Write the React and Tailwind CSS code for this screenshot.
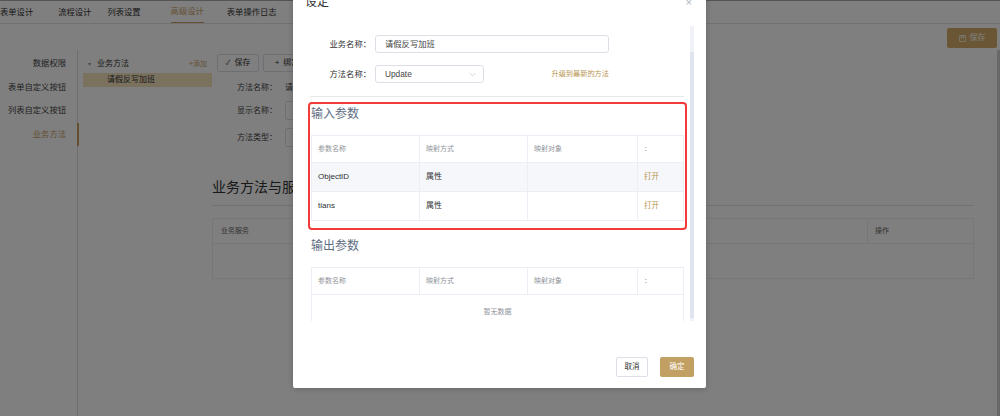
import React from "react";

const GOLD = "#c9a063";

function ParamTable({ rows }) {
  return (
    <div className="ml-px w-[373px] border border-[#ebeef5]">
      <div className="flex h-[26px] text-[7px] text-[#909399]">
        <div className="flex w-[108px] items-center border-r border-[#ebeef5] pl-[6px]">参数名称</div>
        <div className="flex w-[108px] items-center border-r border-[#ebeef5] pl-[6px]">映射方式</div>
        <div className="flex w-[110px] items-center border-r border-[#ebeef5] pl-[6px]">映射对象</div>
        <div className="flex flex-1 items-center pl-[6px]">：</div>
      </div>
      {rows.length === 0 ? (
        <div className="flex h-[36px] items-center justify-center border-t border-[#ebeef5] text-[7px] text-[#909399]">
          暂无数据
        </div>
      ) : (
        rows.map((r, i) => (
          <div
            key={r}
            className={
              "flex h-[29px] border-t border-[#ebeef5] text-[8px] text-[#303133] " +
              (i === 0 ? "bg-[#f5f7fa]" : "bg-white")
            }
          >
            <div className="flex w-[108px] items-center border-r border-[#ebeef5] pl-[6px]">{r}</div>
            <div className="flex w-[108px] items-center border-r border-[#ebeef5] pl-[6px]">属性</div>
            <div className="flex w-[110px] items-center border-r border-[#ebeef5] pl-[6px]"></div>
            <div className="flex flex-1 items-center pl-[6px] text-[7.5px] text-[#b8944f]">打开</div>
          </div>
        ))
      )}
    </div>
  );
}

export default function App() {
  return (
    <div className="relative h-[416px] w-[1000px] overflow-hidden bg-white font-['Liberation_Sans','Noto_Sans_CJK_SC',sans-serif] text-[#333]">
      {/* tab bar */}
      <div className="flex h-[24px] items-stretch border-t border-b border-t-[#aaa] border-b-[#e2e2e2] text-[8.3px] text-[#333]">
        <div className="flex items-center">表单设计</div>
        <div className="ml-[25px] flex items-center">流程设计</div>
        <div className="ml-[16px] flex items-center">列表设置</div>
        <div className="ml-[30px] flex items-center border-b border-[#c9a063] text-[#c9a063]">高级设计</div>
        <div className="ml-[23px] flex items-center">表单操作日志</div>
      </div>

      {/* save row */}
      <div className="flex h-[26px] justify-end pt-[4px] pr-[3px]">
        <div className="flex h-[20px] w-[50px] items-center justify-center gap-[4px] rounded-[2px] bg-[#d4ad68] text-[8px] text-white">
          <svg width="7" height="7" viewBox="0 0 10 10" fill="none" stroke="white" strokeWidth="1">
            <rect x="1" y="1" width="8" height="8" />
            <rect x="3" y="1" width="4" height="3" />
          </svg>
          保存
        </div>
      </div>

      {/* body */}
      <div className="flex h-[366px]">
        {/* left nav */}
        <div className="w-[78px] border-r border-[#dcdcdc] pt-[2px] text-[8.3px] text-[#444]">
          <div className="h-[23.5px] pr-[11px] text-right leading-[23.5px]">数据权限</div>
          <div className="h-[23.5px] pr-[11px] text-right leading-[23.5px]">表单自定义按钮</div>
          <div className="h-[23.5px] pr-[11px] text-right leading-[23.5px]">列表自定义按钮</div>
          <div className="relative h-[23.5px] pr-[11px] text-right leading-[23.5px] text-[#c9a063]">
            业务方法
            <span className="absolute top-0 right-[-1.5px] h-full w-[2px] bg-[#c9a063]"></span>
          </div>
        </div>

        {/* tree */}
        <div className="w-[134px] pt-[6px] pl-[5px] text-[8px]">
          <div className="flex h-[16px] items-center pr-[5px]">
            <span className="ml-[5px] text-[6px] text-[#999]">▾</span>
            <span className="ml-[6px] text-[#333]">业务方法</span>
            <span className="ml-auto text-[7px] text-[#c9a063]">+添加</span>
          </div>
          <div className="mt-[1px] flex h-[14px] items-center bg-[#f5e3be] pl-[24px] text-[#333]">请假反写加班</div>
        </div>

        {/* content */}
        <div className="flex-1 pt-[4px]">
          <div className="flex pl-[5px] text-[8px]">
            <div className="flex h-[18px] w-[42px] items-center justify-center gap-[4px] rounded-[2px] border border-[#dcdfe6] text-[#333]">
              <span className="text-[7px]">✓</span>保存
            </div>
            <div className="ml-[4px] flex h-[18px] w-[64px] items-center justify-center gap-[4px] rounded-[2px] border border-[#dcdfe6] text-[#333]">
              <span>+</span>绑定服务
            </div>
          </div>
          <div className="pl-[5px] text-[8px] text-[#444]">
            <div className="mt-[8px] flex h-[16px] items-center">
              <div className="w-[60px] text-right">方法名称：</div>
              <div className="ml-[8px]">请假反写加班</div>
            </div>
            <div className="mt-[5px] flex h-[19px] items-center">
              <div className="w-[60px] text-right">显示名称：</div>
              <div className="ml-[8px] h-[19px] w-[200px] rounded-[2px] border border-[#dcdfe6]"></div>
            </div>
            <div className="mt-[8px] flex h-[19px] items-center">
              <div className="w-[60px] text-right">方法类型：</div>
              <div className="ml-[8px] h-[19px] w-[200px] rounded-[2px] border border-[#dcdfe6]"></div>
            </div>
          </div>
          <div className="mt-[30px] w-[762px] border-b border-[#e4e4e4] pb-[8px] text-[14px] leading-[20px] text-[#333]">
            业务方法与服务绑定
          </div>
          <div className="mt-[12px] w-[762px] border border-[#ebeef5]">
            <div className="flex h-[25px] border-b border-[#ebeef5] text-[7px] text-[#666]">
              <div className="flex w-[655px] items-center border-r border-[#ebeef5] pl-[8px]">业务服务</div>
              <div className="flex flex-1 items-center pl-[7px]">操作</div>
            </div>
            <div className="h-[34px]"></div>
          </div>
        </div>
      </div>

      {/* page right edge */}
      <div className="absolute top-[50px] right-0 h-[366px] w-[3px] bg-[#d0d0d0]"></div>

      {/* mask */}
      <div className="absolute inset-0 bg-black/50"></div>

      {/* modal */}
      <div className="absolute top-[-22px] left-[293px] flex h-[410px] w-[413px] flex-col rounded-[2px] bg-white shadow-[0_1px_6px_rgba(0,0,0,0.2)]">
        {/* header */}
        <div className="relative h-[48px] shrink-0 pt-[16px] pl-[12px] text-[12px] leading-[16px] text-[#333]">
          设定
          <span className="absolute top-[16px] right-[14px] text-[11px] leading-[16px] text-[#b0b3b8]">×</span>
        </div>

        {/* body */}
        <div className="flex h-[295px] shrink-0 overflow-hidden">
          <div className="ml-[17px] w-[374px]">
            <div className="pt-[9px] text-[8.3px]">
              <div className="flex h-[18px] items-center">
                <div className="w-[62px] pr-[1px] text-right text-[#333]">业务名称：</div>
                <div className="ml-[3px] flex h-[18px] w-[234px] items-center rounded-[3px] border border-[#dcdfe6] pl-[9px] text-[#444]">
                  请假反写加班
                </div>
              </div>
              <div className="mt-[12px] flex h-[18px] items-center">
                <div className="w-[62px] pr-[1px] text-right text-[#333]">方法名称：</div>
                <div className="ml-[3px] flex w-[234px] items-center justify-between">
                  <div className="flex h-[18px] w-[109px] items-center justify-between rounded-[3px] border border-[#dcdfe6] pr-[7px] pl-[9px] text-[#444]">
                    Update
                    <svg width="7" height="5" viewBox="0 0 10 6" fill="none" stroke="#c0c4cc" strokeWidth="1">
                      <path d="M1 1l4 4 4-4" />
                    </svg>
                  </div>
                  <div className="text-[7.2px] text-[#b8944f]">升级到最新的方法</div>
                </div>
              </div>
            </div>
            <div className="mt-[13px] border-t border-[#e8e8e8]"></div>

            {/* input params */}
            <div className="relative mt-[6px] pt-[3px] pb-[8px]">
              <div className="pl-px text-[12px] leading-[16px] text-[#5e6d82]">输入参数</div>
              <div className="mt-[13px]">
                <ParamTable rows={["ObjectID", "tians"]} />
              </div>
              <div className="absolute -top-[1px] -right-[3px] -bottom-[1px] -left-[2px] rounded-[4px] border-2 border-[#f23a3a]"></div>
            </div>

            {/* output params */}
            <div className="mt-[9px] pl-px text-[12px] leading-[16px] text-[#5e6d82]">输出参数</div>
            <div className="mt-[13px]">
              <ParamTable rows={[]} />
            </div>
          </div>
          {/* scrollbar */}
          <div className="ml-[6px] flex w-[4px] flex-col bg-[#f0f2f7]">
            <div className="h-[26px]"></div>
            <div className="h-[266px] bg-[#dfe4ee]"></div>
          </div>
        </div>

        {/* footer */}
        <div className="flex flex-1 items-start justify-end gap-[12px] pt-[36px] pr-[12px]">
          <div className="flex h-[20px] w-[32px] items-center justify-center rounded-[2px] border border-[#dcdfe6] text-[7.5px] text-[#333]">
            取消
          </div>
          <div className="flex h-[20px] w-[34px] items-center justify-center rounded-[2px] bg-[#c2a064] text-[7.5px] text-white">
            确定
          </div>
        </div>
      </div>
    </div>
  );
}
